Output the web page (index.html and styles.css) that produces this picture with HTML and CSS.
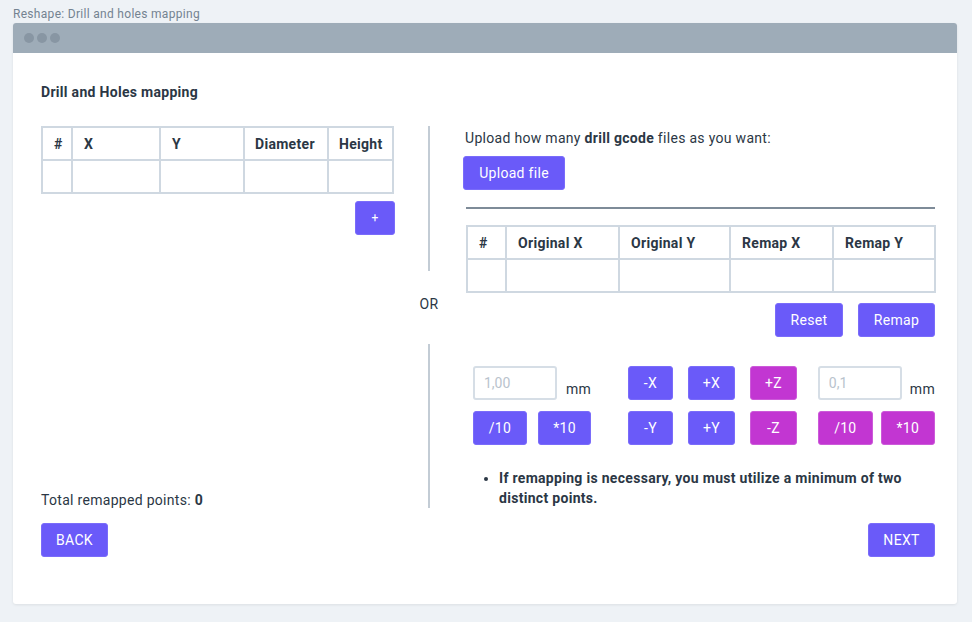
FILE: index.html
```html
<!DOCTYPE html>
<html>
<head>
<meta charset="utf-8">
<link rel="stylesheet" href="styles.css">
</head>
<body>
<div class="caption">Reshape: Drill and holes mapping</div>
<div class="window">
  <div class="titlebar"><span class="dot"></span><span class="dot"></span><span class="dot"></span></div>
  <div class="content">
    <h1 class="title">Drill and Holes mapping</h1>
    <div class="main">
      <div class="left">
        <table class="grid gl">
          <tr><th class="c1">#</th><th class="c2">X</th><th class="c3">Y</th><th class="c4">Diameter</th><th class="c5">Height</th></tr>
          <tr><td></td><td></td><td></td><td></td><td></td></tr>
        </table>
        <div class="plusrow"><button class="btn plus">+</button></div>
        <div class="spacer"></div>
        <div class="total">Total remapped points: <b>0</b></div>
      </div>
      <div class="divider">
        <div class="vline top"></div>
        <div class="or">OR</div>
        <div class="vline bottom"></div>
      </div>
      <div class="right">
        <p class="upload-text">Upload how many <b>drill gcode</b> files as you want:</p>
        <button class="btn upload">Upload file</button>
        <div class="hr"></div>
        <table class="grid gr">
          <tr><th class="d1">#</th><th class="d2">Original X</th><th class="d3">Original Y</th><th class="d4">Remap X</th><th class="d5">Remap Y</th></tr>
          <tr><td></td><td></td><td></td><td></td><td></td></tr>
        </table>
        <div class="actions"><button class="btn reset">Reset</button><button class="btn remap">Remap</button></div>
        <div class="controls">
          <div class="cgroup g1">
            <div class="crow"><input class="num" placeholder="1,00"><span class="unit">mm</span></div>
            <div class="crow"><button class="btn sm w54">/10</button><button class="btn sm w53">*10</button></div>
          </div>
          <div class="cgroup g2">
            <div class="crow"><button class="btn sm w45">-X</button><button class="btn sm w47">+X</button><button class="btn sm w47 mag">+Z</button></div>
            <div class="crow"><button class="btn sm w45">-Y</button><button class="btn sm w47">+Y</button><button class="btn sm w47 mag">-Z</button></div>
          </div>
          <div class="cgroup g3">
            <div class="crow"><input class="num" placeholder="0,1"><span class="unit">mm</span></div>
            <div class="crow"><button class="btn sm w55 mag">/10</button><button class="btn sm w54 mag">*10</button></div>
          </div>
        </div>
        <ul class="notes"><li>If remapping is necessary, you must utilize a minimum of two distinct points.</li></ul>
      </div>
    </div>
    <div class="footer"><button class="btn nav">BACK</button><button class="btn nav">NEXT</button></div>
  </div>
</div>
</body>
</html>
```
FILE: styles.css
```css
* { box-sizing: border-box; }
html, body { margin: 0; padding: 0; }
body {
  background: #eef2f6;
  font-family: Roboto, "Noto Sans", sans-serif;
  letter-spacing: 0.3px;
  color: #2b3745;
  width: 972px;
  height: 622px;
  overflow: hidden;
}
.caption {
  font-size: 12px;
  color: #748391;
  padding: 7px 0 0 13px;
  height: 23px;
  line-height: 15px;
}
.window {
  margin-left: 13px;
  width: 944px;
  height: 581px;
  background: #fff;
  border-radius: 3px;
  box-shadow: 0 1px 3px rgba(0,0,0,0.08);
  overflow: hidden;
}
.titlebar {
  height: 30px;
  background: #9eacb8;
  display: flex;
  align-items: center;
  gap: 3px;
  padding-left: 11px;
}
.dot { width: 10px; height: 10px; border-radius: 50%; background: #8896a3; }
.content { padding: 0 22px 0 28px; }
.title {
  margin: 0;
  font-size: 14px;
  font-weight: 700;
  line-height: 18px;
  padding-top: 30px;
  height: 73px;
}
.main { display: flex; height: 382px; }
.left { width: 354px; display: flex; flex-direction: column; }
.grid { border-collapse: collapse; table-layout: fixed; }
.grid th, .grid td {
  border: 2px solid #cfd8e1;
  height: 33px;
  font-size: 14px;
  font-weight: 700;
  text-align: left;
  padding: 0 0 0 11px;
}
.gl { width: 351px; }
.c1 { width: 30px; } .c2 { width: 88px; } .c3 { width: 84px; } .c4 { width: 84px; } .c5 { width: 65px; }
.gl th.c4, .gl th.c5 { padding-left: 10px; }
.plusrow { display: flex; justify-content: flex-end; padding-top: 7px; }
.btn {
  font-family: inherit;
  letter-spacing: 0.3px;
  border: 1px solid #7a6cfa;
  background: #6a5af9;
  color: #fff;
  border-radius: 3px;
  font-size: 14px;
  height: 34px;
  cursor: pointer;
  padding: 0;
}
.plus { width: 40px; font-size: 12px; }
.spacer { flex: 1; }
.total { font-size: 14px; line-height: 18px; margin-bottom: -1px; }
.divider { width: 68px; display: flex; flex-direction: column; align-items: center; }
.vline { width: 2px; background: #c3ccd5; }
.vline.top { height: 145px; }
.vline.bottom { flex: 1; }
.or { height: 73px; display: flex; align-items: center; font-size: 14px; padding-bottom: 7px; }
.right { width: 472px; }
.upload-text { margin: 3px 0 0 2px; font-size: 14px; line-height: 18px; }
.upload { width: 102px; margin-top: 9px; }
.hr { height: 2px; background: #7e8b98; margin: 17px 0 16px 3px; }
.gr { width: 468px; margin-left: 3px; }
.d1 { width: 39px; } .d2 { width: 113px; } .d3 { width: 111px; } .d4 { width: 103px; } .d5 { width: 102px; }
.actions { display: flex; justify-content: flex-end; gap: 15px; padding-top: 10px; }
.reset { width: 68px; }
.remap { width: 77px; }
.controls { display: flex; margin-top: 29px; padding-left: 10px; }
.cgroup { display: flex; flex-direction: column; gap: 11px; }
.crow { display: flex; gap: 11px; align-items: flex-end; }
.g2 .crow { gap: 15px; }
.g3 .crow { gap: 8px; }
.g1 { width: 155px; }
.g2 { width: 190px; }
.num {
  width: 84px; height: 34px;
  border: 2px solid #d6dee6;
  border-radius: 3px;
  font-family: inherit;
  font-size: 14px;
  padding: 0 9px;
  color: #2b3745;
}
.num::placeholder { color: #b9c3cd; }
.unit { font-size: 14px; line-height: 16px; margin-left: -2px; padding-bottom: 3px; }
.g3 .unit { margin-left: 0; }
.sm { height: 34px; }
.w45 { width: 45px; } .w47 { width: 47px; } .w53 { width: 53px; } .w54 { width: 54px; } .w55 { width: 55px; }
.mag { background: #c236d2; border-color: #cc5ad9; }
.notes { margin: 23px 0 0 0; padding-left: 36px; padding-right: 20px; font-size: 14px; font-weight: 700; line-height: 20px; }
.footer { display: flex; justify-content: space-between; padding-top: 15px; }
.nav { width: 67px; }
```
